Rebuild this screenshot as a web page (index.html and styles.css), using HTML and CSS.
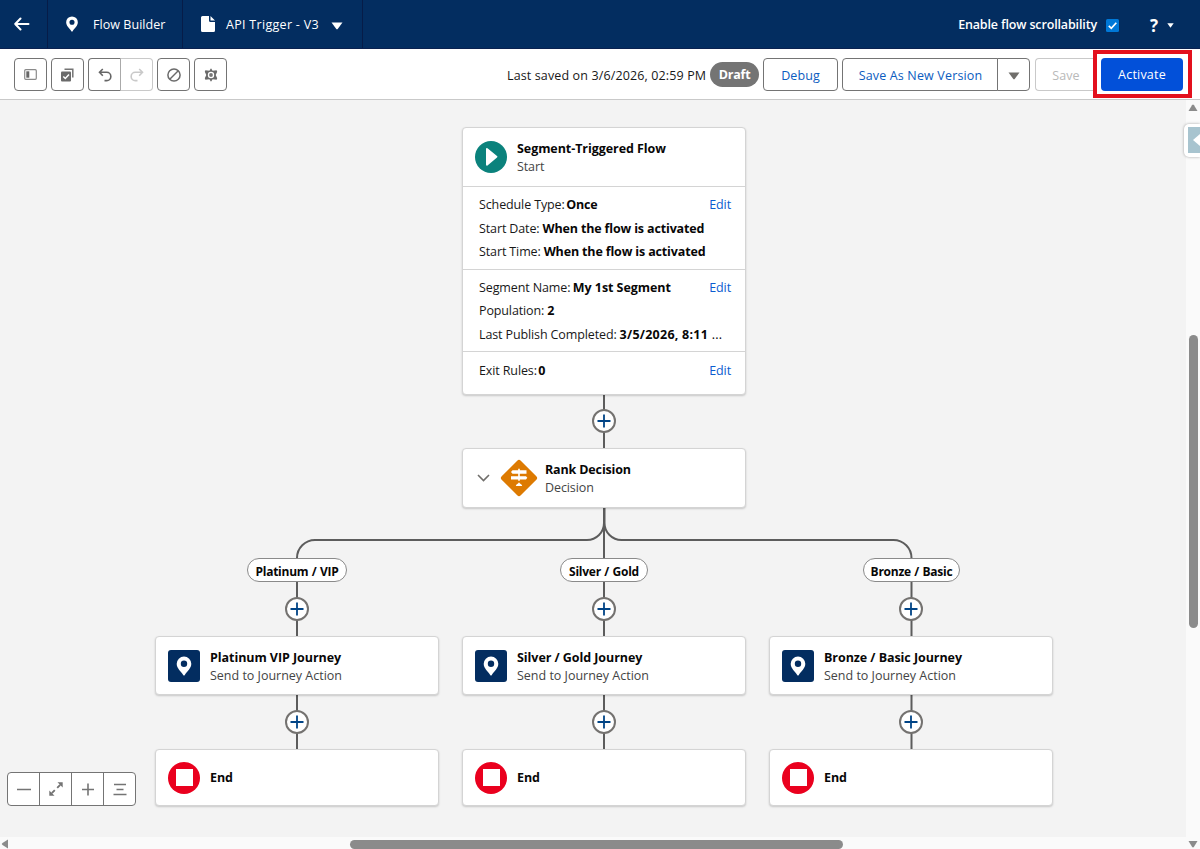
FILE: index.html
```html
<!DOCTYPE html>
<html lang="en">
<head>
<meta charset="utf-8">
<title>Flow Builder</title>
<link rel="stylesheet" href="styles.css">
</head>
<body>
<svg class="defs" width="0" height="0">
  <symbol id="pin" viewBox="0 0 16 20"><path fill-rule="evenodd" d="M8 0.5a7.3 7.3 0 0 0-7.3 7.3c0 4.6 4.2 7.4 6.5 11.2a1 1 0 0 0 1.6 0c2.300-3.800 6.500-6.600 6.500-11.200A7.300 7.300 0 0 0 8 .5zM8 4.600a3.200 3.200 0 1 1 0 6.400a3.200 3.200 0 0 1 0-6.400z"/></symbol>
  <symbol id="plus" viewBox="0 0 14 14"><path d="M7 .5v13M.5 7h13" fill="none" stroke="currentColor" stroke-width="1.8"/></symbol>
</svg>
<header class="header">
  <div class="tab tab-back"><svg width="16" height="14" viewBox="0 0 16 14"><path d="M14.500 7H1.200M6.500 1.500 1.200 7l5.300 5.500" fill="none" stroke="#fff" stroke-width="2" stroke-linecap="round" stroke-linejoin="round"/></svg></div>
  <div class="tab tab-app"><svg class="white" width="14" height="16"><use href="#pin"/></svg><span>Flow Builder</span></div>
  <div class="tab tab-flow"><svg width="14" height="16" viewBox="0 0 14 16"><path d="M1.500 0H8v4.500A1.500 1.500 0 0 0 9.500 6H14v8.500a1.500 1.500 0 0 1-1.500 1.500h-11A1.500 1.500 0 0 1 0 14.500v-13A1.500 1.500 0 0 1 1.500 0zM9.500 0 14 4.500H9.500z" fill="#fff"/></svg><span class="flow-name">API Trigger - V3</span><svg class="caret" width="12" height="8" viewBox="0 0 12 8"><path d="M.5.5h11L6.500 7.300h-1z" fill="#fff"/></svg></div>
  <div class="scroll-toggle"><span>Enable flow scrollability</span><svg width="13" height="13" viewBox="0 0 13 13"><rect width="13" height="13" rx="1.500" fill="#0078d7"/><path d="M2.800 6.800 5.300 9.300 10.300 3.800" stroke="#fff" stroke-width="1.700" fill="none"/></svg></div>
  <div class="help"><span>?</span><svg width="7" height="5" viewBox="0 0 7 5"><path d="M.3.3h6.400L3.500 4.700z" fill="#fff"/></svg></div>
</header>
<div class="toolbar">
  <div class="tools">
    <button class="tool"><svg width="13" height="11" viewBox="0 0 13 11"><rect x=".7" y=".7" width="11.600" height="9.600" rx="1" fill="none" stroke="#8a8a8a" stroke-width="1.200"/><path d="M2.300 2.300h3v6.400h-3z" fill="#666"/></svg></button>
    <button class="tool"><svg width="13" height="14" viewBox="0 0 13 14"><path d="M3.500 1.200h8.300v8.300" fill="none" stroke="#747474" stroke-width="1.500"/><rect x="0" y="3.500" width="10" height="10" rx="1" fill="#6a6a6a"/><path d="m2.300 8.500 2 2L8 6.500" fill="none" stroke="#fff" stroke-width="1.500"/></svg></button>
    <div class="tool-pair">
      <button class="tool"><svg width="14" height="14" viewBox="0 0 14 14"><path d="M4.800 1 1.500 4.300l3.300 3.500M1.700 4.300h7a4 4 0 0 1 0 8.300H6.500" fill="none" stroke="#666" stroke-width="1.600"/></svg></button>
      <button class="tool tool-off"><svg width="14" height="14" viewBox="0 0 14 14"><path d="m9.200 1 3.300 3.300-3.300 3.500M12.300 4.300h-7a4 4 0 0 0 0 8.300h2.200" fill="none" stroke="#c9c9c9" stroke-width="1.600"/></svg></button>
    </div>
    <button class="tool"><svg width="14" height="14" viewBox="0 0 14 14"><circle cx="7" cy="7" r="6.100" fill="none" stroke="#6a6a6a" stroke-width="1.500"/><path d="m3 11 8-8" stroke="#6a6a6a" stroke-width="1.500"/></svg></button>
    <button class="tool"><svg width="14" height="14" viewBox="0 0 14 14"><path d="M7 .3 8.600 2.700 12.600 2.300 13.200 3.800 11.700 7 13.200 10.200 12.600 11.700 8.600 11.300 7 13.700 5.400 11.300 1.400 11.700.8 10.200 2.300 7 .8 3.800 1.400 2.300 5.400 2.700z" fill="#6a6a6a"/><circle cx="7" cy="7" r="3.200" fill="#fff"/><circle cx="7" cy="7" r="1.900" fill="#777"/></svg></button>
  </div>
  <div class="actions">
    <span class="saved">Last saved on 3/6/2026, 02:59 PM</span>
    <span class="draft">Draft</span>
    <button class="btn btn-debug">Debug</button>
    <div class="split"><button class="btn btn-version">Save As New Version</button><button class="btn btn-menu"><svg width="12" height="8" viewBox="0 0 12 8"><path d="M.5.5h11L6.500 7.300h-1z" fill="#706e6b"/></svg></button></div>
    <button class="btn btn-save">Save</button>
    <div class="highlight"><button class="btn btn-activate">Activate</button></div>
  </div>
</div>
<main class="workspace">
  <div class="canvas">
    <svg class="wires" width="1186" height="737" viewBox="0 100 1186 737" fill="none" stroke="#5c5c5c" stroke-width="2">
      <path d="M604 395v54M604 508v129M297 750V558a18 18 0 0 1 18-18H587a17 17 0 0 0 17-17V508M911.500 750V558a18 18 0 0 0-18-18H621.500a17 17 0 0 1-17-17V508M604 695v55"/>
    </svg>
    <section class="card start">
      <div class="node"><svg width="32" height="32" viewBox="0 0 32 32"><circle cx="16" cy="16" r="16" fill="#0b827c"/><path d="M11 8a1 1 0 0 1 1.500-.8L22 15a1 1 0 0 1 0 1.600l-9.500 7.800a1 1 0 0 1-1.500-.8z" fill="#fff"/></svg><div class="label"><b>Segment-Triggered Flow</b><span>Start</span></div></div>
      <div class="facts"><a>Edit</a><p><span>Schedule Type:</span><b class="tight">Once</b></p><p><span>Start Date:</span><b>When the flow is activated</b></p><p><span>Start Time:</span><b>When the flow is activated</b></p></div>
      <div class="facts facts-segment"><a>Edit</a><p><span>Segment Name:</span><b class="tight">My 1st Segment</b></p><p><span>Population:</span><b>2</b></p><p><span>Last Publish Completed:</span><b class="date">3/5/2026, 8:11 <i>...</i></b></p></div>
      <div class="facts facts-exit"><a>Edit</a><p><span>Exit Rules:</span><b class="tight">0</b></p></div>
    </section>
    <section class="card decision">
      <div class="node"><svg class="chev" width="13" height="8" viewBox="0 0 13 8"><path d="m1 1 5.500 5.500L12 1" fill="none" stroke="#706e6b" stroke-width="1.600"/></svg><svg width="38" height="38" viewBox="0 0 38 38"><rect x="5.500" y="5.500" width="27" height="27" rx="2.500" transform="rotate(45 19 19)" fill="#dd7a01"/><path d="M18.200 9.800h1.600v1.500h6.700v3.400h-6.700v2.500H26l1.300 1.600L26 20.500h-6.200v1.300h-1.600v-1.300h-7.200v-3.300h7.200v-2.500h-5.700L11 13l1.500-1.700h5.700zM19 23.300c.5 1.600 3 1.500 3.200 3.700h-6.400c.2-2.200 2.700-2.100 3.200-3.700z" fill="#fff"/></svg><div class="label"><b>Rank Decision</b><span>Decision</span></div></div>
    </section>
    <div class="pill c1 pill-1">Platinum / VIP</div><div class="pill c2 pill-2">Silver / Gold</div><div class="pill c3 pill-3">Bronze / Basic</div>
    <div class="add c2 a0"><svg width="14" height="14"><use href="#plus"/></svg></div>
    <div class="add c1 a1"><svg width="14" height="14"><use href="#plus"/></svg></div>
    <div class="add c2 a1"><svg width="14" height="14"><use href="#plus"/></svg></div>
    <div class="add c3 a1"><svg width="14" height="14"><use href="#plus"/></svg></div>
    <div class="add c1 a2"><svg width="14" height="14"><use href="#plus"/></svg></div>
    <div class="add c2 a2"><svg width="14" height="14"><use href="#plus"/></svg></div>
    <div class="add c3 a2"><svg width="14" height="14"><use href="#plus"/></svg></div>
    <section class="card journey x1"><div class="node"><span class="tile"><svg width="16" height="20"><use href="#pin"/></svg></span><div class="label"><b>Platinum VIP Journey</b><span>Send to Journey Action</span></div></div></section>
    <section class="card journey x2"><div class="node"><span class="tile"><svg width="16" height="20"><use href="#pin"/></svg></span><div class="label"><b>Silver / Gold Journey</b><span>Send to Journey Action</span></div></div></section>
    <section class="card journey x3"><div class="node"><span class="tile"><svg width="16" height="20"><use href="#pin"/></svg></span><div class="label"><b>Bronze / Basic Journey</b><span>Send to Journey Action</span></div></div></section>
    <section class="card end x1"><div class="node"><span class="stop"></span><div class="label"><b>End</b></div></div></section>
    <section class="card end x2"><div class="node"><span class="stop"></span><div class="label"><b>End</b></div></div></section>
    <section class="card end x3"><div class="node"><span class="stop"></span><div class="label"><b>End</b></div></div></section>
    <div class="zoom">
      <button><svg width="14" height="14" viewBox="0 0 14 14"><path d="M0 7.500h14" stroke="#747474" stroke-width="1.600"/></svg></button>
      <button><svg width="14" height="14" viewBox="0 0 14 14"><path d="M8.500.300h5.200v5.200zM.300 8.500v5.200h5.200z" fill="#747474"/><path d="m8.200 5.800 3-3M5.800 8.200l-3 3" stroke="#747474" stroke-width="1.900"/></svg></button>
      <button><svg width="14" height="14" viewBox="0 0 14 14"><path d="M7 1.500v12M1 7.500h12" stroke="#747474" stroke-width="1.600"/></svg></button>
      <button><svg width="14" height="14" viewBox="0 0 14 14"><path d="M1 2.500h12M3.500 7.500h7M.5 12.500h13" stroke="#747474" stroke-width="1.600"/></svg></button>
    </div>
  </div>
  <div class="vbar"><svg width="10" height="8" viewBox="0 0 10 8"><path d="M4 1.200a1.200 1.200 0 0 1 2 0L9.500 7h-9z" fill="#8b8b8b"/></svg><i class="vthumb"></i><svg width="10" height="8" viewBox="0 0 10 8"><path d="M.5 1h9L6 6.800a1.200 1.200 0 0 1-2 0z" fill="#8b8b8b"/></svg></div>
  <div class="hbar"><svg width="8" height="10" viewBox="0 0 8 10"><path d="M8 .5v9L2.500 6a1.200 1.200 0 0 1 0-2z" fill="#8b8b8b"/></svg><i class="hthumb"></i></div>
  <div class="drawer"><span><svg width="8" height="14" viewBox="0 0 8 14"><path d="M8 1v12L1 7z" fill="#fff"/></svg></span></div>
</main>
</body>
</html>
```
FILE: styles.css
```css
* { box-sizing: border-box; }
body { margin: 0; width: 1200px; height: 849px; overflow: hidden; background: #fff; color: #181818; font: 12.5px/18px "Open Sans", "Noto Sans", sans-serif; letter-spacing: -0.1px; }
svg { display: block; flex: none; }
.defs { position: absolute; }
button { font: inherit; letter-spacing: inherit; padding: 0; margin: 0; display: flex; align-items: center; justify-content: center; }
.white, .tile svg { fill: #fff; }

.header { height: 49px; display: flex; background: #032d60; border-bottom: 1px solid #0a2150; color: #fff; white-space: nowrap; }
.header span { padding-top: 2px; }
.tab { display: flex; align-items: center; border-right: 1px solid #061c48; }
.tab-back { width: 48px; padding-left: 14px; }
.tab-app { width: 135px; padding-left: 17px; gap: 14px; letter-spacing: 0.05px; }
.tab-flow { width: 180px; padding-left: 18px; gap: 11px; }
.flow-name { width: 94px; letter-spacing: 0.3px; }
.caret { margin: 3px 0 0 0; }
.scroll-toggle { margin-left: auto; padding-top: 1px; display: flex; align-items: center; gap: 9px; font-weight: 600; letter-spacing: -0.14px; }
.scroll-toggle span { padding-top: 0; }
.scroll-toggle svg { margin-top: 1px; }
.help { width: 81px; padding-left: 31px; display: flex; align-items: center; gap: 8px; font-size: 17px; font-weight: 700; }
.help span { padding-top: 4px; }
.help svg { margin: 3px 0 0 1px; }

.toolbar { height: 51px; display: flex; align-items: flex-start; justify-content: space-between; border-bottom: 1px solid #c9c9c9; padding-left: 14px; }
.tools { display: flex; gap: 4px; padding-top: 9px; }
.tool { width: 33px; height: 33px; background: #fff; border: 1px solid #747474; border-radius: 4px; }
.tool-pair { display: flex; }
.tool-pair .tool:first-child { border-radius: 4px 0 0 4px; border-right-color: #aaa; }
.tool-pair .tool-off { width: 32px; border-color: #c9c9c9; border-left: 0; border-radius: 0 4px 4px 0; }
.actions { display: flex; padding-right: 8px; }
.saved { padding-top: 18px; width: 203px; white-space: nowrap; letter-spacing: 0.13px; }
.draft { width: 49px; height: 25px; margin: 13px 4px 0 0; border-radius: 13px; background: #747474; color: #fff; font-weight: 700; letter-spacing: -0.2px; line-height: 26px; text-align: center; }
.btn { height: 33px; margin-top: 9px; padding-top: 2px; background: #fff; border: 1px solid #747474; border-radius: 4px; color: #0b5cc0; white-space: nowrap; letter-spacing: 0.1px; }
.btn-debug { width: 75px; margin-right: 4px; }
.split { display: flex; margin-right: 5px; }
.btn-version { width: 156px; padding-left: 1px; border-radius: 4px 0 0 4px; letter-spacing: 0.16px; }
.btn-menu { width: 33px; margin-left: -1px; border-radius: 0 4px 4px 0; }
.btn-save { width: 58px; padding-left: 3px; border-color: #c9c9c9; border-right: 0; border-radius: 4px 0 0 4px; color: #b9b9b9; }
.highlight { width: 99px; height: 48px; margin-top: 1px; border: 4px solid #e3101d; background: #fff; display: flex; padding-left: 4px; align-items: center; }
.btn-activate { width: 82px; margin: 0; border: 0; background: #0250d9; color: #fff; letter-spacing: 0.2px; }

.workspace { position: relative; display: grid; grid-template: 737px 12px / 1186px 14px; background: #fafafa; }
.canvas { position: relative; background: #f3f3f3; overflow: hidden; }
.wires { position: absolute; left: 0; top: 0; }
.card { position: absolute; width: 284px; background: #fff; border: 1px solid #d4d4d4; border-radius: 4px; box-shadow: 0 1px 2px rgba(0,0,0,.18); white-space: nowrap; }
.start { left: 462px; top: 27px; height: 268px; }
.decision { left: 462px; top: 348px; height: 60px; }
.decision .node { padding-left: 14px; }
.decision .label { margin-left: 7px; }
.decision .label b { letter-spacing: -0.15px; }
.chev { margin-right: 10px; }
.journey { top: 536px; height: 59px; }
.journey .label { line-height: 18px; }
.journey .label span { letter-spacing: -0.01px; }
.journey .node { height: 57px; }
.end { top: 649px; height: 57px; }
.x1 { left: 155px; }
.x2 { left: 462px; }
.x3 { left: 769px; }
.node { height: 58px; display: flex; align-items: center; padding-left: 12px; }
.end .node { height: 55px; }
.label { margin-left: 10px; padding-top: 2px; display: flex; flex-direction: column; line-height: 18.500px; color: #444; }
.label b { color: #080707; letter-spacing: -0.06px; }
.end .label { padding-top: 1px; }
.tile { width: 32px; height: 32px; border-radius: 3px; background: #032d60; display: flex; align-items: center; justify-content: center; }
.stop { width: 32px; height: 32px; border-radius: 50%; background: #ea001e linear-gradient(#fff, #fff) center / 17px 17px no-repeat; }
.facts { border-top: 1px solid #d4d4d4; padding: 6px 14px 5px 16px; height: 82.500px; }
.facts a { float: right; color: #0b5cd0; line-height: 23.500px; }
.facts p { margin: 0; line-height: 23.500px; letter-spacing: -0.12px; }
.facts b { margin-left: 3px; color: #080707; letter-spacing: -0.15px; }
.facts .tight { margin-left: 1.500px; }
.facts-segment { padding-top: 6.200px; }
.facts-exit { padding-top: 7px; height: 42px; }
.facts-segment .tight { margin-left: 2.500px; letter-spacing: -0.05px; }
.facts .date { letter-spacing: 0.25px; }
.facts i { font-style: normal; font-weight: 400; }
.pill { position: absolute; top: 458px; height: 24px; border: 1px solid #8a8a8a; border-radius: 12px; background: #fff; color: #080707; font-weight: 700; font-size: 12px; letter-spacing: -0.25px; word-spacing: 0.6px; line-height: 25px; text-align: center; white-space: nowrap; }
.pill-1 { width: 100px; margin-left: -50px; }
.pill-2 { width: 88px; margin-left: -44px; }
.pill-3 { width: 97px; margin-left: -48px; }
.add { position: absolute; width: 24px; height: 24px; margin-left: -12px; border: 2px solid #747270; border-radius: 50%; background: #fff; color: #014486; display: flex; align-items: center; justify-content: center; }
.c1 { left: 297px; }
.c2 { left: 604px; }
.c3 { left: 911px; }
.a0 { top: 309px; }
.a1 { top: 497px; }
.a2 { top: 610px; }
.zoom { position: absolute; left: 7px; top: 672px; width: 129px; height: 34px; display: flex; border: 1px solid #747474; border-radius: 4px; background: #fff; overflow: hidden; }
.zoom button { flex: 1; border: 0; background: none; }
.zoom button + button { border-left: 1px solid #747474; }
.vbar { grid-row: 1 / 3; grid-column: 2; display: flex; flex-direction: column; align-items: center; padding: 4px 0 1px; }
.vthumb { width: 9px; height: 293px; margin: 223px 0 auto; border-radius: 5px; background: #8b8b8b; }
.hbar { grid-row: 2; grid-column: 1; display: flex; align-items: center; padding-top: 2px; }
.hthumb { width: 493px; height: 9px; margin-left: 342px; border-radius: 5px; background: #8b8b8b; }
.drawer { position: absolute; right: 0; top: 24px; width: 16px; height: 33px; padding: 3px 0 4px 4px; border-radius: 5px 0 0 5px; background: #fff; box-shadow: 0 0 3px rgba(0,0,0,.35); }
.drawer span { display: flex; align-items: center; justify-content: flex-end; height: 26px; background: #a8c4cf; }
```
